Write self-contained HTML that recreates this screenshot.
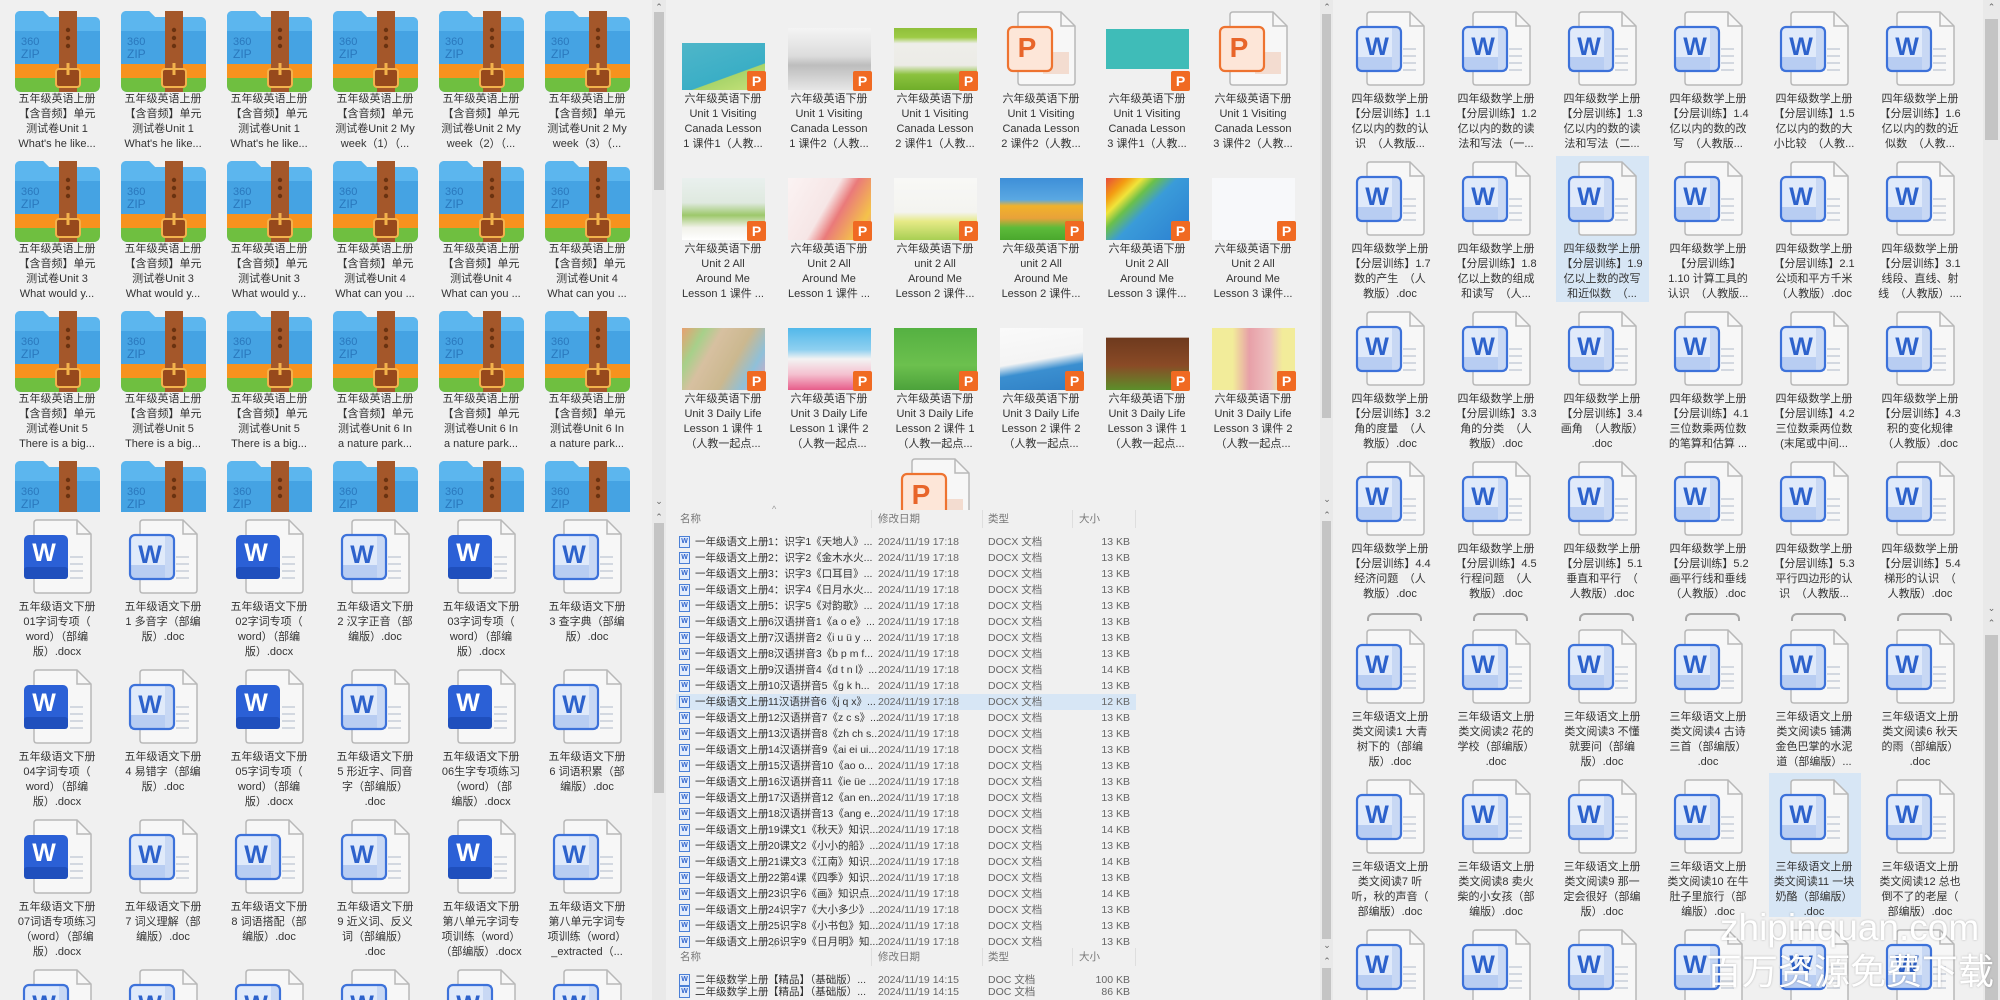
<!DOCTYPE html>
<html style="overflow:hidden"><head><meta charset="utf-8">
<style>
*{margin:0;padding:0;box-sizing:border-box}
html,body{width:2000px;height:1000px;overflow:hidden}
body{background:#f0f0f0;font-family:"Liberation Sans","Noto Sans CJK SC",sans-serif;position:relative}
.p{position:absolute;top:0;height:1000px;overflow:hidden;background:#f0f0f0}
.sec{position:absolute;left:0;right:0;overflow:hidden}
.t{position:absolute;width:100px;height:150px}
.t svg.i{position:absolute;left:0;top:0;width:100px;height:85px}
.l{position:absolute;top:85px;left:0;width:100px;text-align:center;font-size:11px;line-height:15px;color:#333;white-space:nowrap}
.sb{position:absolute;top:0;height:1000px;width:14px;background:#e9e9e9}
.th{position:absolute;left:2px;right:2px;background:#c4c4c4}
.ar{position:absolute;left:0;width:14px;text-align:center;font-size:9px;color:#666;line-height:10px}
.img{position:absolute;left:9px;width:83px;overflow:hidden}
.pb{position:absolute;width:19px;height:20px;background:#f06a22;color:#fff;font-size:14px;font-weight:bold;text-align:center;line-height:20px;border-radius:2px}
.row{position:absolute;left:0;width:655px;height:16px;font-size:10.5px;line-height:16px;color:#333;white-space:nowrap}
.row span{position:absolute}
.row .ic{left:13px;top:2px;width:11px;height:12px;border:1px solid #4a7fd6;background:#e3ecfb;font-size:7px;line-height:10px;text-align:center;color:#2e63cc;font-weight:bold}
.hd{position:absolute;left:0;width:655px;height:18px;font-size:10.5px;line-height:18px;color:#777}
.hd span{position:absolute}
.hd i{position:absolute;top:0;width:1px;height:18px;background:#dedede}
.sel{position:absolute;background:#d7e6f5}
.cap{position:absolute;width:10px;height:8px;border:2px solid #a8a8a8;border-bottom:none;border-radius:6px 6px 0 0}
</style></head><body>
<svg width="0" height="0" style="position:absolute">
<defs>
<clipPath id="zc"><path d="M8 10 Q8 4 14 4 H36 L42 10 H87 Q93 10 93 16 V78 Q93 85 86 85 H15 Q8 85 8 78 Z"/></clipPath>
</defs>
<symbol id="zip" viewBox="0 0 100 85">
<g clip-path="url(#zc)">
<rect x="0" y="0" width="100" height="85" fill="#45a3e3"/>
<rect x="0" y="0" width="100" height="24" fill="#5cb6ee"/>
<rect x="0" y="57" width="100" height="14" fill="#f7921e"/>
<rect x="0" y="71" width="100" height="14" fill="#6fbf40"/>
</g>
<text x="14" y="38" font-family="Liberation Sans" font-size="11" fill="#2a78bd">360</text>
<text x="14" y="51" font-family="Liberation Sans" font-size="12" fill="#2a78bd">ZIP</text>
<rect x="52" y="4" width="18" height="81" fill="#a4572a"/>
<circle cx="61" cy="23" r="2.2" fill="#6a3210"/><circle cx="61" cy="31" r="2.2" fill="#6a3210"/><circle cx="61" cy="39" r="2.2" fill="#6a3210"/>
<rect x="49" y="62" width="24" height="18" rx="3" fill="#97491c" stroke="#f3b24c" stroke-width="2"/>
<line x1="61" y1="56" x2="61" y2="68" stroke="#f3b24c" stroke-width="3"/>
</symbol>
<symbol id="wo" viewBox="0 0 100 85">
<path d="M30 5 H70 L84 19 V75 Q84 78 81 78 H30 Q27 78 27 75 V8 Q27 5 30 5 Z" fill="#f7f7f7" stroke="#b8b8b8" stroke-width="1.5"/>
<path d="M70 5 V19 H84" fill="none" stroke="#b8b8b8" stroke-width="1.5"/>
<path d="M63 42H76M63 49H76M63 56H76M63 63H76" stroke="#d3d8e0" stroke-width="2"/>
<rect x="17" y="20" width="44" height="44" rx="5" fill="#e0eafa"/>
<rect x="17" y="50" width="44" height="14" fill="#b8cdf2"/>
<rect x="52" y="20" width="9" height="44" fill="#c8d8f4"/>
<rect x="17" y="20" width="44" height="44" rx="5" fill="none" stroke="#3d72da" stroke-width="2.2"/>
<text x="37" y="48" text-anchor="middle" font-family="Liberation Sans" font-weight="bold" font-size="25" fill="#2d62cc">W</text>
</symbol>
<symbol id="ws" viewBox="0 0 100 85">
<path d="M30 5 H70 L84 19 V75 Q84 78 81 78 H30 Q27 78 27 75 V8 Q27 5 30 5 Z" fill="#f7f7f7" stroke="#b8b8b8" stroke-width="1.5"/>
<path d="M70 5 V19 H84" fill="none" stroke="#b8b8b8" stroke-width="1.5"/>
<path d="M63 42H76M63 49H76M63 56H76M63 63H76" stroke="#d3d8e0" stroke-width="2"/>
<rect x="17" y="20" width="44" height="44" rx="5" fill="#2b60d6"/>
<rect x="17" y="52" width="44" height="12" rx="3" fill="#1f4fbd"/>
<text x="37" y="46" text-anchor="middle" font-family="Liberation Sans" font-weight="bold" font-size="25" fill="#fff">W</text>
</symbol>
<symbol id="pp" viewBox="0 0 100 85">
<path d="M30 5 H70 L84 19 V75 Q84 78 81 78 H30 Q27 78 27 75 V8 Q27 5 30 5 Z" fill="#f7f7f7" stroke="#b8b8b8" stroke-width="1.5"/>
<path d="M70 5 V19 H84" fill="none" stroke="#b8b8b8" stroke-width="1.5"/>
<rect x="52" y="45" width="26" height="22" fill="#f3dcd0"/>
<rect x="17" y="20" width="44" height="44" rx="5" fill="#fde6d8" stroke="#ee7330" stroke-width="2.2"/>
<text x="36" y="50" text-anchor="middle" font-family="Liberation Sans" font-weight="bold" font-size="28" fill="#e8652a">P</text>
</symbol>
</svg>

<!-- LEFT PANEL -->
<div class="p" style="left:0;width:652px">
 <div class="sec" style="top:0;height:512px">
  <div class="t" style="left:7px;top:7px"><svg class="i"><use href="#zip"/></svg><div class="l">五年级英语上册<br>【含音频】单元<br>测试卷Unit 1<br>What's he like...</div></div>
  <div class="t" style="left:113px;top:7px"><svg class="i"><use href="#zip"/></svg><div class="l">五年级英语上册<br>【含音频】单元<br>测试卷Unit 1<br>What's he like...</div></div>
  <div class="t" style="left:219px;top:7px"><svg class="i"><use href="#zip"/></svg><div class="l">五年级英语上册<br>【含音频】单元<br>测试卷Unit 1<br>What's he like...</div></div>
  <div class="t" style="left:325px;top:7px"><svg class="i"><use href="#zip"/></svg><div class="l">五年级英语上册<br>【含音频】单元<br>测试卷Unit 2 My<br>week（1）（...</div></div>
  <div class="t" style="left:431px;top:7px"><svg class="i"><use href="#zip"/></svg><div class="l">五年级英语上册<br>【含音频】单元<br>测试卷Unit 2 My<br>week（2）（...</div></div>
  <div class="t" style="left:537px;top:7px"><svg class="i"><use href="#zip"/></svg><div class="l">五年级英语上册<br>【含音频】单元<br>测试卷Unit 2 My<br>week（3）（...</div></div>

  <div class="t" style="left:7px;top:157px"><svg class="i"><use href="#zip"/></svg><div class="l">五年级英语上册<br>【含音频】单元<br>测试卷Unit 3<br>What would y...</div></div>
  <div class="t" style="left:113px;top:157px"><svg class="i"><use href="#zip"/></svg><div class="l">五年级英语上册<br>【含音频】单元<br>测试卷Unit 3<br>What would y...</div></div>
  <div class="t" style="left:219px;top:157px"><svg class="i"><use href="#zip"/></svg><div class="l">五年级英语上册<br>【含音频】单元<br>测试卷Unit 3<br>What would y...</div></div>
  <div class="t" style="left:325px;top:157px"><svg class="i"><use href="#zip"/></svg><div class="l">五年级英语上册<br>【含音频】单元<br>测试卷Unit 4<br>What can you ...</div></div>
  <div class="t" style="left:431px;top:157px"><svg class="i"><use href="#zip"/></svg><div class="l">五年级英语上册<br>【含音频】单元<br>测试卷Unit 4<br>What can you ...</div></div>
  <div class="t" style="left:537px;top:157px"><svg class="i"><use href="#zip"/></svg><div class="l">五年级英语上册<br>【含音频】单元<br>测试卷Unit 4<br>What can you ...</div></div>

  <div class="t" style="left:7px;top:307px"><svg class="i"><use href="#zip"/></svg><div class="l">五年级英语上册<br>【含音频】单元<br>测试卷Unit 5<br>There is a big...</div></div>
  <div class="t" style="left:113px;top:307px"><svg class="i"><use href="#zip"/></svg><div class="l">五年级英语上册<br>【含音频】单元<br>测试卷Unit 5<br>There is a big...</div></div>
  <div class="t" style="left:219px;top:307px"><svg class="i"><use href="#zip"/></svg><div class="l">五年级英语上册<br>【含音频】单元<br>测试卷Unit 5<br>There is a big...</div></div>
  <div class="t" style="left:325px;top:307px"><svg class="i"><use href="#zip"/></svg><div class="l">五年级英语上册<br>【含音频】单元<br>测试卷Unit 6 In<br>a nature park...</div></div>
  <div class="t" style="left:431px;top:307px"><svg class="i"><use href="#zip"/></svg><div class="l">五年级英语上册<br>【含音频】单元<br>测试卷Unit 6 In<br>a nature park...</div></div>
  <div class="t" style="left:537px;top:307px"><svg class="i"><use href="#zip"/></svg><div class="l">五年级英语上册<br>【含音频】单元<br>测试卷Unit 6 In<br>a nature park...</div></div>

  <div class="t" style="left:7px;top:457px"><svg class="i"><use href="#zip"/></svg></div>
  <div class="t" style="left:113px;top:457px"><svg class="i"><use href="#zip"/></svg></div>
  <div class="t" style="left:219px;top:457px"><svg class="i"><use href="#zip"/></svg></div>
  <div class="t" style="left:325px;top:457px"><svg class="i"><use href="#zip"/></svg></div>
  <div class="t" style="left:431px;top:457px"><svg class="i"><use href="#zip"/></svg></div>
  <div class="t" style="left:537px;top:457px"><svg class="i"><use href="#zip"/></svg></div>
 </div>
 <div class="sec" style="top:512px;height:488px">
  <div class="t" style="left:7px;top:3px"><svg class="i"><use href="#ws"/></svg><div class="l">五年级语文下册<br>01字词专项（<br>word）（部编<br>版）.docx</div></div>
  <div class="t" style="left:113px;top:3px"><svg class="i"><use href="#wo"/></svg><div class="l">五年级语文下册<br>1 多音字（部编<br>版）.doc</div></div>
  <div class="t" style="left:219px;top:3px"><svg class="i"><use href="#ws"/></svg><div class="l">五年级语文下册<br>02字词专项（<br>word）（部编<br>版）.docx</div></div>
  <div class="t" style="left:325px;top:3px"><svg class="i"><use href="#wo"/></svg><div class="l">五年级语文下册<br>2 汉字正音（部<br>编版）.doc</div></div>
  <div class="t" style="left:431px;top:3px"><svg class="i"><use href="#ws"/></svg><div class="l">五年级语文下册<br>03字词专项（<br>word）（部编<br>版）.docx</div></div>
  <div class="t" style="left:537px;top:3px"><svg class="i"><use href="#wo"/></svg><div class="l">五年级语文下册<br>3 查字典（部编<br>版）.doc</div></div>

  <div class="t" style="left:7px;top:153px"><svg class="i"><use href="#ws"/></svg><div class="l">五年级语文下册<br>04字词专项（<br>word）（部编<br>版）.docx</div></div>
  <div class="t" style="left:113px;top:153px"><svg class="i"><use href="#wo"/></svg><div class="l">五年级语文下册<br>4 易错字（部编<br>版）.doc</div></div>
  <div class="t" style="left:219px;top:153px"><svg class="i"><use href="#ws"/></svg><div class="l">五年级语文下册<br>05字词专项（<br>word）（部编<br>版）.docx</div></div>
  <div class="t" style="left:325px;top:153px"><svg class="i"><use href="#wo"/></svg><div class="l">五年级语文下册<br>5 形近字、同音<br>字（部编版）<br>.doc</div></div>
  <div class="t" style="left:431px;top:153px"><svg class="i"><use href="#ws"/></svg><div class="l">五年级语文下册<br>06生字专项练习<br>（word）（部<br>编版）.docx</div></div>
  <div class="t" style="left:537px;top:153px"><svg class="i"><use href="#wo"/></svg><div class="l">五年级语文下册<br>6 词语积累（部<br>编版）.doc</div></div>

  <div class="t" style="left:7px;top:303px"><svg class="i"><use href="#ws"/></svg><div class="l">五年级语文下册<br>07词语专项练习<br>（word）（部编<br>版）.docx</div></div>
  <div class="t" style="left:113px;top:303px"><svg class="i"><use href="#wo"/></svg><div class="l">五年级语文下册<br>7 词义理解（部<br>编版）.doc</div></div>
  <div class="t" style="left:219px;top:303px"><svg class="i"><use href="#wo"/></svg><div class="l">五年级语文下册<br>8 词语搭配（部<br>编版）.doc</div></div>
  <div class="t" style="left:325px;top:303px"><svg class="i"><use href="#wo"/></svg><div class="l">五年级语文下册<br>9 近义词、反义<br>词（部编版）<br>.doc</div></div>
  <div class="t" style="left:431px;top:303px"><svg class="i"><use href="#ws"/></svg><div class="l">五年级语文下册<br>第八单元字词专<br>项训练（word）<br>（部编版）.docx</div></div>
  <div class="t" style="left:537px;top:303px"><svg class="i"><use href="#wo"/></svg><div class="l">五年级语文下册<br>第八单元字词专<br>项训练（word）<br>_extracted（...</div></div>

  <div class="t" style="left:7px;top:453px"><svg class="i"><use href="#wo"/></svg></div>
  <div class="t" style="left:113px;top:453px"><svg class="i"><use href="#wo"/></svg></div>
  <div class="t" style="left:219px;top:453px"><svg class="i"><use href="#wo"/></svg></div>
  <div class="t" style="left:325px;top:453px"><svg class="i"><use href="#wo"/></svg></div>
  <div class="t" style="left:431px;top:453px"><svg class="i"><use href="#wo"/></svg></div>
  <div class="t" style="left:537px;top:453px"><svg class="i"><use href="#wo"/></svg></div>
 </div>
</div>
<div class="sb" style="left:652px">
 <div class="ar" style="top:2px">⌃</div>
 <div class="th" style="top:12px;height:178px"></div>
 <div class="ar" style="top:496px">⌄</div>
 <div class="ar" style="top:512px">⌃</div>
 <div class="th" style="top:523px;height:270px"></div>
</div>

<!-- MIDDLE PANEL -->
<div class="p" style="left:666px;width:654px">
 <div class="sec" style="top:0;height:510px;left:-666px;width:1320px">
  <div class="t" style="left:673px;top:7px">
   <div class="img" style="top:36px;height:47px;background:linear-gradient(160deg,#4fb6c9 0%,#3aaec6 65%,#a8d46a 66%,#c9e37a 100%)"></div>
   <div class="pb" style="left:74px;top:64px">P</div>
   <div class="l">六年级英语下册<br>Unit 1 Visiting<br>Canada Lesson<br>1 课件1（人教...</div></div>
  <div class="t" style="left:779px;top:7px">
   <div class="img" style="top:21px;height:62px;background:linear-gradient(180deg,#f4f4f4 0%,#dcdcdc 45%,#bdbdbd 60%,#e6e6e6 100%)"></div>
   <div class="pb" style="left:74px;top:64px">P</div>
   <div class="l">六年级英语下册<br>Unit 1 Visiting<br>Canada Lesson<br>1 课件2（人教...</div></div>
  <div class="t" style="left:885px;top:7px">
   <div class="img" style="top:21px;height:62px;background:linear-gradient(180deg,#8fbf3a 0%,#9dcb45 15%,#eeeeea 25%,#ecebe6 60%,#8cc23e 75%,#6fae2a 100%)"></div>
   <div class="pb" style="left:74px;top:64px">P</div>
   <div class="l">六年级英语下册<br>Unit 1 Visiting<br>Canada Lesson<br>2 课件1（人教...</div></div>
  <div class="t" style="left:991px;top:7px"><svg class="i"><use href="#pp"/></svg>
   <div class="l">六年级英语下册<br>Unit 1 Visiting<br>Canada Lesson<br>2 课件2（人教...</div></div>
  <div class="t" style="left:1097px;top:7px">
   <div class="img" style="top:22px;height:40px;background:#3fbcb8"></div>
   <div class="pb" style="left:74px;top:64px">P</div>
   <div class="l">六年级英语下册<br>Unit 1 Visiting<br>Canada Lesson<br>3 课件1（人教...</div></div>
  <div class="t" style="left:1203px;top:7px"><svg class="i"><use href="#pp"/></svg>
   <div class="l">六年级英语下册<br>Unit 1 Visiting<br>Canada Lesson<br>3 课件2（人教...</div></div>
  <div class="t" style="left:673px;top:157px">
   <div class="img" style="top:21px;height:62px;background:linear-gradient(180deg,#e9f0ee 0%,#dfe9df 40%,#9dc86b 60%,#f2f2ea 80%,#fff 100%)"></div>
   <div class="pb" style="left:74px;top:64px">P</div>
   <div class="l">六年级英语下册<br>Unit 2 All<br>Around Me<br>Lesson 1 课件 ...</div></div>
  <div class="t" style="left:779px;top:157px">
   <div class="img" style="top:21px;height:62px;background:linear-gradient(120deg,#fbf3f3 0%,#f6e6e6 45%,#ea7a7a 60%,#f4c24a 85%,#f19a9a 100%)"></div>
   <div class="pb" style="left:74px;top:64px">P</div>
   <div class="l">六年级英语下册<br>Unit 2 All<br>Around Me<br>Lesson 1 课件 ...</div></div>
  <div class="t" style="left:885px;top:157px">
   <div class="img" style="top:21px;height:62px;background:linear-gradient(180deg,#f8f8f6 0%,#f4f4f0 55%,#e6ea86 70%,#a8cf53 100%)"></div>
   <div class="pb" style="left:74px;top:64px">P</div>
   <div class="l">六年级英语下册<br>unit 2 All<br>Around Me<br>Lesson 2 课件...</div></div>
  <div class="t" style="left:991px;top:157px">
   <div class="img" style="top:21px;height:62px;background:linear-gradient(180deg,#3e8fd8 0%,#5aa8e2 35%,#f2b22a 45%,#e8a23a 65%,#5dbb3a 80%,#4aa82d 100%)"></div>
   <div class="pb" style="left:74px;top:64px">P</div>
   <div class="l">六年级英语下册<br>unit 2 All<br>Around Me<br>Lesson 2 课件...</div></div>
  <div class="t" style="left:1097px;top:157px">
   <div class="img" style="top:21px;height:62px;background:linear-gradient(135deg,#e74b3c 0%,#f39c12 15%,#f1e43a 25%,#6bc04a 35%,#3a9bd9 50%,#2b7fd1 100%)"></div>
   <div class="pb" style="left:74px;top:64px">P</div>
   <div class="l">六年级英语下册<br>Unit 2 All<br>Around Me<br>Lesson 3 课件...</div></div>
  <div class="t" style="left:1203px;top:157px">
   <div class="img" style="top:21px;height:62px;background:#f7f8fa"></div>
   <div class="pb" style="left:74px;top:64px">P</div>
   <div class="l">六年级英语下册<br>Unit 2 All<br>Around Me<br>Lesson 3 课件...</div></div>
  <div class="t" style="left:673px;top:307px">
   <div class="img" style="top:21px;height:62px;background:linear-gradient(120deg,#e8a070 0%,#a7d08a 20%,#d7c0a0 35%,#cbb88f 60%,#8fc0d9 80%,#e2a3c0 100%)"></div>
   <div class="pb" style="left:74px;top:64px">P</div>
   <div class="l">六年级英语下册<br>Unit 3 Daily Life<br>Lesson 1 课件 1<br>（人教一起点...</div></div>
  <div class="t" style="left:779px;top:307px">
   <div class="img" style="top:21px;height:62px;background:linear-gradient(180deg,#52b8ea 0%,#8fd0f0 35%,#f3f3f3 50%,#f4c0cf 75%,#e75c8a 100%)"></div>
   <div class="pb" style="left:74px;top:64px">P</div>
   <div class="l">六年级英语下册<br>Unit 3 Daily Life<br>Lesson 1 课件 2<br>（人教一起点...</div></div>
  <div class="t" style="left:885px;top:307px">
   <div class="img" style="top:21px;height:62px;background:linear-gradient(180deg,#55b142 0%,#6cc04e 60%,#4ca23b 100%)"></div>
   <div class="pb" style="left:74px;top:64px">P</div>
   <div class="l">六年级英语下册<br>Unit 3 Daily Life<br>Lesson 2 课件 1<br>（人教一起点...</div></div>
  <div class="t" style="left:991px;top:307px">
   <div class="img" style="top:21px;height:62px;background:linear-gradient(170deg,#fafafa 0%,#f4f4f4 50%,#3b8fd0 65%,#2f7fc4 100%)"></div>
   <div class="pb" style="left:74px;top:64px">P</div>
   <div class="l">六年级英语下册<br>Unit 3 Daily Life<br>Lesson 2 课件 2<br>（人教一起点...</div></div>
  <div class="t" style="left:1097px;top:307px">
   <div class="img" style="top:21px;height:62px;background:linear-gradient(180deg,#f0f0f0 0%,#f0f0f0 15%,#6e3a1e 16%,#8a4a26 60%,#5c8f2a 100%)"></div>
   <div class="pb" style="left:74px;top:64px">P</div>
   <div class="l">六年级英语下册<br>Unit 3 Daily Life<br>Lesson 3 课件 1<br>（人教一起点...</div></div>
  <div class="t" style="left:1203px;top:307px">
   <div class="img" style="top:21px;height:62px;background:linear-gradient(90deg,#f2ec9a 0%,#f2ec9a 25%,#e7a0a8 45%,#eec0c0 70%,#f2ec9a 85%)"></div>
   <div class="pb" style="left:74px;top:64px">P</div>
   <div class="l">六年级英语下册<br>Unit 3 Daily Life<br>Lesson 3 课件 2<br>（人教一起点...</div></div>
  <div class="t" style="left:885px;top:454px"><svg class="i"><use href="#pp"/></svg></div>
 </div>
 <div class="hd" style="top:510px"><span style="left:14px">名称</span><span style="left:106px;top:-10px;font-size:9px;color:#999">^</span><i style="left:205px"></i><span style="left:212px">修改日期</span><i style="left:316px"></i><span style="left:322px">类型</span><i style="left:406px"></i><span style="left:413px">大小</span><i style="left:469px"></i></div>
 <div class="sel" style="left:10px;top:694px;width:460px;height:16px"></div>
 <div style="position:absolute;left:0;top:534px;width:655px">
  <div class="row" style="top:0"><span class="ic">W</span><span style="left:29px">一年级语文上册</span><span style="left:102px">1：识字1《天地人》...</span><span style="left:212px;color:#666">2024/11/19 17:18</span><span style="left:322px;color:#666">DOCX 文档</span><span style="right:191px;color:#666">13 KB</span></div>
  <div class="row" style="top:16px"><span class="ic">W</span><span style="left:29px">一年级语文上册</span><span style="left:102px">2：识字2《金木水火...</span><span style="left:212px;color:#666">2024/11/19 17:18</span><span style="left:322px;color:#666">DOCX 文档</span><span style="right:191px;color:#666">13 KB</span></div>
  <div class="row" style="top:32px"><span class="ic">W</span><span style="left:29px">一年级语文上册</span><span style="left:102px">3：识字3《口耳目》...</span><span style="left:212px;color:#666">2024/11/19 17:18</span><span style="left:322px;color:#666">DOCX 文档</span><span style="right:191px;color:#666">13 KB</span></div>
  <div class="row" style="top:48px"><span class="ic">W</span><span style="left:29px">一年级语文上册</span><span style="left:102px">4：识字4《日月水火...</span><span style="left:212px;color:#666">2024/11/19 17:18</span><span style="left:322px;color:#666">DOCX 文档</span><span style="right:191px;color:#666">13 KB</span></div>
  <div class="row" style="top:64px"><span class="ic">W</span><span style="left:29px">一年级语文上册</span><span style="left:102px">5：识字5《对韵歌》...</span><span style="left:212px;color:#666">2024/11/19 17:18</span><span style="left:322px;color:#666">DOCX 文档</span><span style="right:191px;color:#666">13 KB</span></div>
  <div class="row" style="top:80px"><span class="ic">W</span><span style="left:29px">一年级语文上册</span><span style="left:102px">6汉语拼音1《a o e》...</span><span style="left:212px;color:#666">2024/11/19 17:18</span><span style="left:322px;color:#666">DOCX 文档</span><span style="right:191px;color:#666">13 KB</span></div>
  <div class="row" style="top:96px"><span class="ic">W</span><span style="left:29px">一年级语文上册</span><span style="left:102px">7汉语拼音2《i u ü y ...</span><span style="left:212px;color:#666">2024/11/19 17:18</span><span style="left:322px;color:#666">DOCX 文档</span><span style="right:191px;color:#666">13 KB</span></div>
  <div class="row" style="top:112px"><span class="ic">W</span><span style="left:29px">一年级语文上册</span><span style="left:102px">8汉语拼音3《b p m f...</span><span style="left:212px;color:#666">2024/11/19 17:18</span><span style="left:322px;color:#666">DOCX 文档</span><span style="right:191px;color:#666">13 KB</span></div>
  <div class="row" style="top:128px"><span class="ic">W</span><span style="left:29px">一年级语文上册</span><span style="left:102px">9汉语拼音4《d t n l》...</span><span style="left:212px;color:#666">2024/11/19 17:18</span><span style="left:322px;color:#666">DOCX 文档</span><span style="right:191px;color:#666">14 KB</span></div>
  <div class="row" style="top:144px"><span class="ic">W</span><span style="left:29px">一年级语文上册</span><span style="left:102px">10汉语拼音5《g k h...</span><span style="left:212px;color:#666">2024/11/19 17:18</span><span style="left:322px;color:#666">DOCX 文档</span><span style="right:191px;color:#666">13 KB</span></div>
  <div class="row" style="top:160px"><span class="ic">W</span><span style="left:29px">一年级语文上册</span><span style="left:102px">11汉语拼音6《j q x》...</span><span style="left:212px;color:#666">2024/11/19 17:18</span><span style="left:322px;color:#666">DOCX 文档</span><span style="right:191px;color:#666">12 KB</span></div>
  <div class="row" style="top:176px"><span class="ic">W</span><span style="left:29px">一年级语文上册</span><span style="left:102px">12汉语拼音7《z c s》...</span><span style="left:212px;color:#666">2024/11/19 17:18</span><span style="left:322px;color:#666">DOCX 文档</span><span style="right:191px;color:#666">13 KB</span></div>
  <div class="row" style="top:192px"><span class="ic">W</span><span style="left:29px">一年级语文上册</span><span style="left:102px">13汉语拼音8《zh ch s...</span><span style="left:212px;color:#666">2024/11/19 17:18</span><span style="left:322px;color:#666">DOCX 文档</span><span style="right:191px;color:#666">13 KB</span></div>
  <div class="row" style="top:208px"><span class="ic">W</span><span style="left:29px">一年级语文上册</span><span style="left:102px">14汉语拼音9《ai ei ui...</span><span style="left:212px;color:#666">2024/11/19 17:18</span><span style="left:322px;color:#666">DOCX 文档</span><span style="right:191px;color:#666">13 KB</span></div>
  <div class="row" style="top:224px"><span class="ic">W</span><span style="left:29px">一年级语文上册</span><span style="left:102px">15汉语拼音10《ao o...</span><span style="left:212px;color:#666">2024/11/19 17:18</span><span style="left:322px;color:#666">DOCX 文档</span><span style="right:191px;color:#666">13 KB</span></div>
  <div class="row" style="top:240px"><span class="ic">W</span><span style="left:29px">一年级语文上册</span><span style="left:102px">16汉语拼音11《ie üe ...</span><span style="left:212px;color:#666">2024/11/19 17:18</span><span style="left:322px;color:#666">DOCX 文档</span><span style="right:191px;color:#666">13 KB</span></div>
  <div class="row" style="top:256px"><span class="ic">W</span><span style="left:29px">一年级语文上册</span><span style="left:102px">17汉语拼音12《an en...</span><span style="left:212px;color:#666">2024/11/19 17:18</span><span style="left:322px;color:#666">DOCX 文档</span><span style="right:191px;color:#666">13 KB</span></div>
  <div class="row" style="top:272px"><span class="ic">W</span><span style="left:29px">一年级语文上册</span><span style="left:102px">18汉语拼音13《ang e...</span><span style="left:212px;color:#666">2024/11/19 17:18</span><span style="left:322px;color:#666">DOCX 文档</span><span style="right:191px;color:#666">13 KB</span></div>
  <div class="row" style="top:288px"><span class="ic">W</span><span style="left:29px">一年级语文上册</span><span style="left:102px">19课文1《秋天》知识...</span><span style="left:212px;color:#666">2024/11/19 17:18</span><span style="left:322px;color:#666">DOCX 文档</span><span style="right:191px;color:#666">14 KB</span></div>
  <div class="row" style="top:304px"><span class="ic">W</span><span style="left:29px">一年级语文上册</span><span style="left:102px">20课文2《小小的船》...</span><span style="left:212px;color:#666">2024/11/19 17:18</span><span style="left:322px;color:#666">DOCX 文档</span><span style="right:191px;color:#666">13 KB</span></div>
  <div class="row" style="top:320px"><span class="ic">W</span><span style="left:29px">一年级语文上册</span><span style="left:102px">21课文3《江南》知识...</span><span style="left:212px;color:#666">2024/11/19 17:18</span><span style="left:322px;color:#666">DOCX 文档</span><span style="right:191px;color:#666">14 KB</span></div>
  <div class="row" style="top:336px"><span class="ic">W</span><span style="left:29px">一年级语文上册</span><span style="left:102px">22第4课《四季》知识...</span><span style="left:212px;color:#666">2024/11/19 17:18</span><span style="left:322px;color:#666">DOCX 文档</span><span style="right:191px;color:#666">13 KB</span></div>
  <div class="row" style="top:352px"><span class="ic">W</span><span style="left:29px">一年级语文上册</span><span style="left:102px">23识字6《画》知识点...</span><span style="left:212px;color:#666">2024/11/19 17:18</span><span style="left:322px;color:#666">DOCX 文档</span><span style="right:191px;color:#666">14 KB</span></div>
  <div class="row" style="top:368px"><span class="ic">W</span><span style="left:29px">一年级语文上册</span><span style="left:102px">24识字7《大小多少》...</span><span style="left:212px;color:#666">2024/11/19 17:18</span><span style="left:322px;color:#666">DOCX 文档</span><span style="right:191px;color:#666">13 KB</span></div>
  <div class="row" style="top:384px"><span class="ic">W</span><span style="left:29px">一年级语文上册</span><span style="left:102px">25识字8《小书包》知...</span><span style="left:212px;color:#666">2024/11/19 17:18</span><span style="left:322px;color:#666">DOCX 文档</span><span style="right:191px;color:#666">13 KB</span></div>
  <div class="row" style="top:400px"><span class="ic">W</span><span style="left:29px">一年级语文上册</span><span style="left:102px">26识字9《日月明》知...</span><span style="left:212px;color:#666">2024/11/19 17:18</span><span style="left:322px;color:#666">DOCX 文档</span><span style="right:191px;color:#666">13 KB</span></div>
 </div>
 <div class="hd" style="top:948px"><span style="left:14px">名称</span><span style="left:106px;top:-10px;font-size:9px;color:#999">^</span><i style="left:205px"></i><span style="left:212px">修改日期</span><i style="left:316px"></i><span style="left:322px">类型</span><i style="left:406px"></i><span style="left:413px">大小</span><i style="left:469px"></i></div>
 <div class="row" style="top:972px"><span class="ic">W</span><span style="left:29px">二年级数学上册</span><span style="left:102px">【精品】（基础版）...</span><span style="left:212px;color:#666">2024/11/19 14:15</span><span style="left:322px;color:#666">DOC 文档</span><span style="right:191px;color:#666">100 KB</span></div>
 <div class="row" style="top:984px"><span class="ic">W</span><span style="left:29px">二年级数学上册</span><span style="left:102px">【精品】（基础版）...</span><span style="left:212px;color:#666">2024/11/19 14:15</span><span style="left:322px;color:#666">DOC 文档</span><span style="right:191px;color:#666">86 KB</span></div>
</div>
<div class="sb" style="left:1320px;width:13px">
 <div class="ar" style="top:2px">⌃</div>
 <div class="th" style="top:14px;height:404px"></div>
 <div class="ar" style="top:494px">⌄</div>
 <div class="ar" style="top:510px">⌃</div>
 <div class="th" style="top:521px;height:418px"></div>
 <div class="ar" style="top:940px">⌄</div>
 <div class="ar" style="top:956px">⌃</div>
 <div class="th" style="top:968px;height:32px"></div>
</div>

<!-- RIGHT PANEL -->
<div class="p" style="left:1333px;width:650px">
 <div class="sec" style="top:0;height:606px;left:-1333px;width:1983px">
  <div class="sel" style="left:1556px;top:156px;width:93px;height:146px"></div>
  <div class="t" style="left:1340px;top:7px"><svg class="i"><use href="#wo"/></svg><div class="l">四年级数学上册<br>【分层训练】1.1<br>亿以内的数的认<br>识　（人教版...</div></div>
  <div class="t" style="left:1446px;top:7px"><svg class="i"><use href="#wo"/></svg><div class="l">四年级数学上册<br>【分层训练】1.2<br>亿以内的数的读<br>法和写法（一...</div></div>
  <div class="t" style="left:1552px;top:7px"><svg class="i"><use href="#wo"/></svg><div class="l">四年级数学上册<br>【分层训练】1.3<br>亿以内的数的读<br>法和写法（二...</div></div>
  <div class="t" style="left:1658px;top:7px"><svg class="i"><use href="#wo"/></svg><div class="l">四年级数学上册<br>【分层训练】1.4<br>亿以内的数的改<br>写　（人教版...</div></div>
  <div class="t" style="left:1764px;top:7px"><svg class="i"><use href="#wo"/></svg><div class="l">四年级数学上册<br>【分层训练】1.5<br>亿以内的数的大<br>小比较　（人教...</div></div>
  <div class="t" style="left:1870px;top:7px"><svg class="i"><use href="#wo"/></svg><div class="l">四年级数学上册<br>【分层训练】1.6<br>亿以内的数的近<br>似数　（人教...</div></div>

  <div class="t" style="left:1340px;top:157px"><svg class="i"><use href="#wo"/></svg><div class="l">四年级数学上册<br>【分层训练】1.7<br>数的产生　（人<br>教版）.doc</div></div>
  <div class="t" style="left:1446px;top:157px"><svg class="i"><use href="#wo"/></svg><div class="l">四年级数学上册<br>【分层训练】1.8<br>亿以上数的组成<br>和读写　（人...</div></div>
  <div class="t" style="left:1552px;top:157px"><svg class="i"><use href="#wo"/></svg><div class="l">四年级数学上册<br>【分层训练】1.9<br>亿以上数的改写<br>和近似数　（...</div></div>
  <div class="t" style="left:1658px;top:157px"><svg class="i"><use href="#wo"/></svg><div class="l">四年级数学上册<br>【分层训练】<br>1.10 计算工具的<br>认识　（人教版...</div></div>
  <div class="t" style="left:1764px;top:157px"><svg class="i"><use href="#wo"/></svg><div class="l">四年级数学上册<br>【分层训练】2.1<br>公顷和平方千米<br>（人教版）.doc</div></div>
  <div class="t" style="left:1870px;top:157px"><svg class="i"><use href="#wo"/></svg><div class="l">四年级数学上册<br>【分层训练】3.1<br>线段、直线、射<br>线　（人教版）....</div></div>

  <div class="t" style="left:1340px;top:307px"><svg class="i"><use href="#wo"/></svg><div class="l">四年级数学上册<br>【分层训练】3.2<br>角的度量　（人<br>教版）.doc</div></div>
  <div class="t" style="left:1446px;top:307px"><svg class="i"><use href="#wo"/></svg><div class="l">四年级数学上册<br>【分层训练】3.3<br>角的分类　（人<br>教版）.doc</div></div>
  <div class="t" style="left:1552px;top:307px"><svg class="i"><use href="#wo"/></svg><div class="l">四年级数学上册<br>【分层训练】3.4<br>画角　（人教版）<br>.doc</div></div>
  <div class="t" style="left:1658px;top:307px"><svg class="i"><use href="#wo"/></svg><div class="l">四年级数学上册<br>【分层训练】4.1<br>三位数乘两位数<br>的笔算和估算 ...</div></div>
  <div class="t" style="left:1764px;top:307px"><svg class="i"><use href="#wo"/></svg><div class="l">四年级数学上册<br>【分层训练】4.2<br>三位数乘两位数<br>(末尾或中间...</div></div>
  <div class="t" style="left:1870px;top:307px"><svg class="i"><use href="#wo"/></svg><div class="l">四年级数学上册<br>【分层训练】4.3<br>积的变化规律<br>（人教版）.doc</div></div>

  <div class="t" style="left:1340px;top:457px"><svg class="i"><use href="#wo"/></svg><div class="l">四年级数学上册<br>【分层训练】4.4<br>经济问题　（人<br>教版）.doc</div></div>
  <div class="t" style="left:1446px;top:457px"><svg class="i"><use href="#wo"/></svg><div class="l">四年级数学上册<br>【分层训练】4.5<br>行程问题　（人<br>教版）.doc</div></div>
  <div class="t" style="left:1552px;top:457px"><svg class="i"><use href="#wo"/></svg><div class="l">四年级数学上册<br>【分层训练】5.1<br>垂直和平行　（<br>人教版）.doc</div></div>
  <div class="t" style="left:1658px;top:457px"><svg class="i"><use href="#wo"/></svg><div class="l">四年级数学上册<br>【分层训练】5.2<br>画平行线和垂线<br>（人教版）.doc</div></div>
  <div class="t" style="left:1764px;top:457px"><svg class="i"><use href="#wo"/></svg><div class="l">四年级数学上册<br>【分层训练】5.3<br>平行四边形的认<br>识　（人教版...</div></div>
  <div class="t" style="left:1870px;top:457px"><svg class="i"><use href="#wo"/></svg><div class="l">四年级数学上册<br>【分层训练】5.4<br>梯形的认识　（<br>人教版）.doc</div></div>
 </div>
 <div class="sec" style="top:606px;height:394px;left:-1333px;width:1983px">
  <div class="cap" style="left:1367px;top:7px;width:55px"></div>
  <div class="cap" style="left:1473px;top:7px;width:55px"></div>
  <div class="cap" style="left:1579px;top:7px;width:55px"></div>
  <div class="cap" style="left:1685px;top:7px;width:55px"></div>
  <div class="cap" style="left:1791px;top:7px;width:55px"></div>
  <div class="cap" style="left:1897px;top:7px;width:55px"></div>
  <div class="sel" style="left:1769px;top:167px;width:92px;height:144px"></div>
  <div class="t" style="left:1340px;top:19px"><svg class="i"><use href="#wo"/></svg><div class="l">三年级语文上册<br>类文阅读1 大青<br>树下的（部编<br>版）.doc</div></div>
  <div class="t" style="left:1446px;top:19px"><svg class="i"><use href="#wo"/></svg><div class="l">三年级语文上册<br>类文阅读2 花的<br>学校（部编版）<br>.doc</div></div>
  <div class="t" style="left:1552px;top:19px"><svg class="i"><use href="#wo"/></svg><div class="l">三年级语文上册<br>类文阅读3 不懂<br>就要问（部编<br>版）.doc</div></div>
  <div class="t" style="left:1658px;top:19px"><svg class="i"><use href="#wo"/></svg><div class="l">三年级语文上册<br>类文阅读4 古诗<br>三首（部编版）<br>.doc</div></div>
  <div class="t" style="left:1764px;top:19px"><svg class="i"><use href="#wo"/></svg><div class="l">三年级语文上册<br>类文阅读5 铺满<br>金色巴掌的水泥<br>道（部编版）...</div></div>
  <div class="t" style="left:1870px;top:19px"><svg class="i"><use href="#wo"/></svg><div class="l">三年级语文上册<br>类文阅读6 秋天<br>的雨（部编版）<br>.doc</div></div>

  <div class="t" style="left:1340px;top:169px"><svg class="i"><use href="#wo"/></svg><div class="l">三年级语文上册<br>类文阅读7 听<br>听，秋的声音（<br>部编版）.doc</div></div>
  <div class="t" style="left:1446px;top:169px"><svg class="i"><use href="#wo"/></svg><div class="l">三年级语文上册<br>类文阅读8 卖火<br>柴的小女孩（部<br>编版）.doc</div></div>
  <div class="t" style="left:1552px;top:169px"><svg class="i"><use href="#wo"/></svg><div class="l">三年级语文上册<br>类文阅读9 那一<br>定会很好（部编<br>版）.doc</div></div>
  <div class="t" style="left:1658px;top:169px"><svg class="i"><use href="#wo"/></svg><div class="l">三年级语文上册<br>类文阅读10 在牛<br>肚子里旅行（部<br>编版）.doc</div></div>
  <div class="t" style="left:1764px;top:169px"><svg class="i"><use href="#wo"/></svg><div class="l">三年级语文上册<br>类文阅读11 一块<br>奶酪（部编版）<br>.doc</div></div>
  <div class="t" style="left:1870px;top:169px"><svg class="i"><use href="#wo"/></svg><div class="l">三年级语文上册<br>类文阅读12 总也<br>倒不了的老屋（<br>部编版）.doc</div></div>

  <div class="t" style="left:1340px;top:319px;height:75px;overflow:hidden"><svg class="i"><use href="#wo"/></svg></div>
  <div class="t" style="left:1446px;top:319px;height:75px;overflow:hidden"><svg class="i"><use href="#wo"/></svg></div>
  <div class="t" style="left:1552px;top:319px;height:75px;overflow:hidden"><svg class="i"><use href="#wo"/></svg></div>
  <div class="t" style="left:1658px;top:319px;height:75px;overflow:hidden"><svg class="i"><use href="#wo"/></svg></div>
  <div class="t" style="left:1764px;top:319px;height:75px;overflow:hidden"><svg class="i"><use href="#wo"/></svg></div>
  <div class="t" style="left:1870px;top:319px;height:75px;overflow:hidden"><svg class="i"><use href="#wo"/></svg></div>
 </div>
</div>
<div class="sb" style="left:1983px;width:17px">
 <div class="ar" style="top:2px;width:17px">⌃</div>
 <div class="th" style="top:19px;height:121px"></div>
 <div class="ar" style="top:603px;width:17px">⌄</div>
 <div class="ar" style="top:618px;width:17px">⌃</div>
 <div class="th" style="top:635px;height:365px"></div>
</div>

<div style="position:absolute;left:1720px;top:908px;font-size:37px;line-height:40px;color:#fff;text-shadow:0 0 2px rgba(0,0,0,.25);white-space:nowrap;font-family:'Liberation Sans',sans-serif">zhipinquan.com</div>
<div style="position:absolute;left:1706px;top:950px;height:50px;overflow:hidden;font-size:36px;line-height:44px;color:#fff;text-shadow:0 0 2px rgba(0,0,0,.25);white-space:nowrap;font-family:'Liberation Sans','Noto Sans CJK SC',sans-serif">百万资源免费下载</div>
</body></html>
